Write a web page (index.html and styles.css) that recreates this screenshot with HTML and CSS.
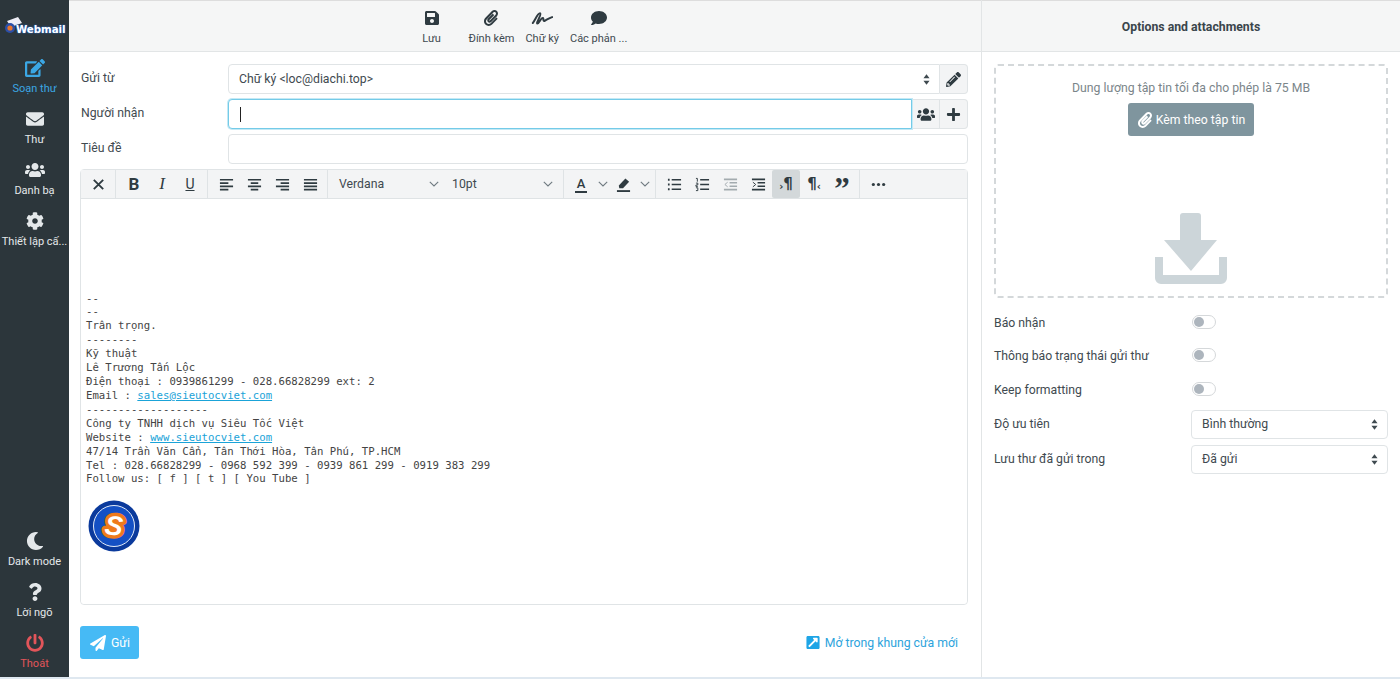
FILE: index.html
```html
<!DOCTYPE html>
<html lang="vi">
<head>
  <meta charset="UTF-8" />
  <title>Webmail</title>
  <link rel="stylesheet" href="styles.css">
</head>
<body>
  <svg class="hidden">
    <symbol id="i-save" viewBox="0 0 448 512"><path d="M433.941 129.941l-83.882-83.882A48 48 0 0 0 316.118 32H48C21.49 32 0 53.49 0 80v352c0 26.51 21.49 48 48 48h352c26.51 0 48-21.49 48-48V163.882a48 48 0 0 0-14.059-33.941zM224 416c-35.346 0-64-28.654-64-64 0-35.346 28.654-64 64-64s64 28.654 64 64c0 35.346-28.654 64-64 64zm96-304.52V212c0 6.627-5.373 12-12 12H76c-6.627 0-12-5.373-12-12V108c0-6.627 5.373-12 12-12h228.52c3.183 0 6.235 1.264 8.485 3.515l3.48 3.48A11.996 11.996 0 0 1 320 111.48z"/></symbol>
    <symbol id="i-clip" viewBox="0 0 448 512"><path d="M43.246 466.142c-58.43-60.289-57.341-157.511 1.386-217.581L254.392 34c44.316-45.332 116.351-45.336 160.671 0 43.89 44.894 43.943 117.329 0 162.276L232.214 383.128c-29.855 30.537-78.633 30.111-107.982-.998-28.275-29.97-27.368-77.473 1.452-106.953l143.743-146.835c6.182-6.314 16.312-6.422 22.626-.241l22.861 22.379c6.315 6.182 6.422 16.312.241 22.626L171.427 319.927c-4.932 5.045-5.236 13.428-.648 18.292 4.372 4.634 11.245 4.711 15.688.165l182.849-186.851c19.613-20.062 19.613-52.725-.011-72.798-19.189-19.627-49.957-19.637-69.154 0L90.39 293.295c-34.763 35.56-35.299 93.12-1.191 128.313 34.01 35.093 88.985 35.137 123.058.286l172.06-175.999c6.177-6.319 16.307-6.433 22.626-.256l22.877 22.364c6.319 6.177 6.434 16.307.256 22.626l-172.06 175.998c-59.576 60.938-155.943 60.216-214.77-.485z"/></symbol>
    <symbol id="i-comment" viewBox="0 0 512 512"><path d="M256 32C114.6 32 0 125.1 0 240c0 49.6 21.4 95 57 130.7C44.5 421.1 2.7 466 2.2 466.5c-2.2 2.3-2.8 5.7-1.5 8.7S4.8 480 8 480c66.3 0 116-31.8 140.6-51.4 32.7 12.3 69 19.4 107.4 19.4 141.4 0 256-93.1 256-208S397.4 32 256 32z"/></symbol>
    <symbol id="i-edit" viewBox="0 0 576 512"><path d="M402.6 83.2l90.2 90.2c3.8 3.8 3.8 10 0 13.8L274.4 405.6l-92.8 10.3c-12.4 1.4-22.9-9.1-21.5-21.5l10.3-92.8L388.8 83.2c3.8-3.8 10-3.8 13.8 0zm162-22.9l-48.8-48.8c-15.2-15.2-39.9-15.2-55.2 0l-35.4 35.4c-3.8 3.8-3.8 10 0 13.8l90.2 90.2c3.8 3.8 10 3.8 13.8 0l35.4-35.4c15.2-15.3 15.2-40 0-55.2zM384 346.2V448H64V128h229.8c3.2 0 6.2-1.3 8.5-3.5l40-40c7.6-7.6 2.2-20.5-8.5-20.5H48C21.5 64 0 85.5 0 112v352c0 26.5 21.5 48 48 48h352c26.5 0 48-21.5 48-48V306.2c0-10.7-12.9-16-20.5-8.5l-40 40c-2.2 2.3-3.5 5.3-3.5 8.5z"/></symbol>
    <symbol id="i-mail" viewBox="0 0 512 512"><path d="M502.3 190.8c3.9-3.1 9.7-.2 9.7 4.7V400c0 26.5-21.5 48-48 48H48c-26.5 0-48-21.5-48-48V195.6c0-5 5.7-7.8 9.7-4.7 22.4 17.4 52.1 39.5 154.1 113.6 21.1 15.4 56.7 47.8 92.2 47.6 35.7.3 72-32.8 92.3-47.6 102-74.1 131.6-96.3 154-113.7zM256 320c23.2.4 56.6-29.2 73.4-41.4 132.7-96.3 142.8-104.7 173.4-128.7 5.8-4.5 9.2-11.5 9.2-18.9v-19c0-26.5-21.5-48-48-48H48C21.5 64 0 85.5 0 112v19c0 7.4 3.4 14.3 9.2 18.9 30.6 23.9 40.7 32.4 173.4 128.7 16.8 12.2 50.2 41.8 73.4 41.4z"/></symbol>
    <symbol id="i-users" viewBox="0 0 640 512"><path d="M96 224c35.3 0 64-28.7 64-64s-28.7-64-64-64-64 28.7-64 64 28.7 64 64 64zm448 0c35.3 0 64-28.7 64-64s-28.7-64-64-64-64 28.7-64 64 28.7 64 64 64zm32 32h-64c-17.6 0-33.5 7.1-45.1 18.6 40.3 22.1 68.9 62 75.1 109.4h66c17.7 0 32-14.3 32-32v-32c0-35.3-28.7-64-64-64zm-256 0c61.9 0 112-50.1 112-112S381.9 32 320 32 208 82.1 208 144s50.1 112 112 112zm76.8 32h-8.3c-20.8 10-43.9 16-68.5 16s-47.6-6-68.5-16h-8.3C179.6 288 128 339.6 128 403.2V432c0 26.5 21.5 48 48 48h288c26.5 0 48-21.5 48-48v-28.8c0-63.6-51.6-115.2-115.2-115.2zm-223.7-13.4C161.5 263.1 145.6 256 128 256H64c-35.3 0-64 28.7-64 64v32c0 17.7 14.3 32 32 32h65.9c6.3-47.4 34.9-87.3 75.2-109.4z"/></symbol>
    <symbol id="i-cog" viewBox="0 0 512 512"><path d="M487.4 315.7l-42.6-24.6c4.3-23.2 4.3-47 0-70.2l42.6-24.6c4.9-2.8 7.1-8.6 5.5-14-11.1-35.6-30-67.8-54.7-94.6-3.8-4.1-10-5.1-14.8-2.3L380.8 110c-17.9-15.4-38.5-27.3-60.8-35.1V25.8c0-5.6-3.9-10.5-9.4-11.7-36.7-8.2-74.3-7.8-109.2 0-5.5 1.2-9.4 6.1-9.4 11.7V75c-22.2 7.9-42.8 19.8-60.8 35.1L88.7 85.5c-4.9-2.8-11-1.9-14.8 2.3-24.7 26.7-43.6 58.9-54.7 94.6-1.7 5.4.6 11.2 5.5 14L67.3 221c-4.3 23.2-4.3 47 0 70.2l-42.6 24.6c-4.9 2.8-7.1 8.6-5.5 14 11.1 35.6 30 67.8 54.7 94.6 3.8 4.1 10 5.1 14.8 2.3l42.6-24.6c17.9 15.4 38.5 27.3 60.8 35.1v49.2c0 5.6 3.9 10.5 9.4 11.7 36.7 8.2 74.3 7.8 109.2 0 5.5-1.2 9.4-6.1 9.4-11.7v-49.2c22.2-7.9 42.8-19.8 60.8-35.1l42.6 24.6c4.9 2.8 11 1.9 14.8-2.3 24.7-26.7 43.6-58.9 54.7-94.6 1.5-5.5-.7-11.3-5.6-14.1zM256 336c-44.1 0-80-35.9-80-80s35.9-80 80-80 80 35.9 80 80-35.9 80-80 80z"/></symbol>
    <symbol id="i-moon" viewBox="0 0 512 512"><path d="M283.211 512c78.962 0 151.079-35.925 198.857-94.792 7.068-8.708-.639-21.43-11.562-19.35-124.203 23.654-238.262-71.576-238.262-196.954 0-72.222 38.662-138.635 101.498-174.394 9.686-5.512 7.25-20.197-3.756-22.23A258.156 258.156 0 0 0 283.211 0c-141.309 0-256 114.511-256 256 0 141.309 114.511 256 256 256z"/></symbol>
    <symbol id="i-question" viewBox="0 0 384 512"><path d="M202.021 0C122.202 0 70.503 32.703 29.914 91.026c-7.363 10.58-5.093 25.086 5.178 32.874l43.138 32.709c10.373 7.865 25.132 6.026 33.253-4.148 25.049-31.381 43.63-49.449 82.757-49.449 30.764 0 68.816 19.799 68.816 49.631 0 22.552-18.617 34.134-48.993 51.164-35.423 19.86-82.299 44.576-82.299 106.405V320c0 13.255 10.745 24 24 24h72.471c13.255 0 24-10.745 24-24v-5.773c0-42.86 125.268-44.645 125.268-160.627C377.504 66.256 286.902 0 202.021 0zM192 373.459c-38.196 0-69.271 31.075-69.271 69.271 0 38.195 31.075 69.27 69.271 69.27s69.271-31.075 69.271-69.271-31.075-69.27-69.271-69.27z"/></symbol>
    <symbol id="i-power" viewBox="0 0 512 512"><path d="M400 54.1c63 45 104 118.6 104 201.9 0 136.8-110.8 247.7-247.5 248C120 504.3 8.2 393 8 256.4 7.9 173.1 48.9 99.3 111.8 54.2c11.7-8.3 28-4.8 35 7.7L162.6 90c5.9 10.5 3.1 23.8-6.6 31-41.5 30.8-68 79.6-68 134.9-.1 92.3 74.5 168.1 168 168.1 91.6 0 168.6-74.2 168-169.1-.3-51.8-24.7-101.8-68.1-134-9.7-7.2-12.4-20.5-6.5-30.9l15.8-28.1c7-12.4 23.2-16.1 34.8-7.8zM296 264V24c0-13.3-10.7-24-24-24h-32c-13.3 0-24 10.7-24 24v240c0 13.3 10.7 24 24 24h32c13.3 0 24-10.7 24-24z"/></symbol>
    <symbol id="i-plane" viewBox="0 0 512 512"><path d="M476 3.2L12.5 270.6c-18.1 10.4-15.8 35.6 2.2 43.2L121 358.4l287.3-253.2c5.5-4.9 13.3 2.6 8.6 8.3L176 407v80.5c0 23.6 28.5 32.9 42.5 15.8L282 426l124.6 52.2c14.2 6 30.4-2.9 33-18.2l72-432C515 7.8 493.3-6.8 476 3.2z"/></symbol>
    <symbol id="i-external" viewBox="0 0 448 512"><path d="M448 80v352c0 26.51-21.49 48-48 48H48c-26.51 0-48-21.49-48-48V80c0-26.51 21.49-48 48-48h352c26.51 0 48 21.49 48 48zm-88 16H248.029c-21.313 0-32.08 25.861-16.971 40.971l31.984 31.987L67.515 364.485c-4.686 4.686-4.686 12.284 0 16.971l31.029 31.029c4.687 4.686 12.285 4.686 16.971 0l195.526-195.526 31.988 31.991C357.058 263.977 384 253.425 384 231.979V120c0-13.255-10.745-24-24-24z"/></symbol>
    <symbol id="i-pencil" viewBox="0 0 512 512"><path d="M497.9 142.1l-46.1 46.1c-4.7 4.7-12.3 4.7-17 0l-111-111c-4.7-4.7-4.7-12.3 0-17l46.1-46.1c18.7-18.7 49.1-18.7 67.9 0l60.1 60.1c18.8 18.7 18.8 49.1 0 67.9zM284.2 99.8L21.6 362.4.4 483.9c-2.9 16.4 11.4 30.6 27.8 27.8l121.5-21.3 262.6-262.6c4.7-4.7 4.7-12.3 0-17l-111-111c-4.8-4.7-12.4-4.7-17.1 0zM124.1 339.9c-5.5-5.5-5.5-14.3 0-19.8l154-154c5.5-5.5 14.3-5.5 19.8 0s5.5 14.3 0 19.8l-154 154c-5.5 5.5-14.3 5.5-19.8 0zM88 424h48v36.3l-64.5 11.3-31.1-31.1L51.7 376H88v48z"/></symbol>
    <symbol id="i-plus" viewBox="0 0 448 512"><path d="M416 208H272V64c0-17.67-14.33-32-32-32h-32c-17.67 0-32 14.33-32 32v144H32c-17.67 0-32 14.33-32 32v32c0 17.67 14.33 32 32 32h144v144c0 17.67 14.33 32 32 32h32c17.67 0 32-14.33 32-32V304h144c17.67 0 32-14.33 32-32v-32c0-17.67-14.33-32-32-32z"/></symbol>
    <symbol id="i-sort" viewBox="0 0 8 12"><path d="M4 0 L7.5 4.5 H.5 Z M4 12 L.5 7.5 H7.5 Z"/></symbol>
    <symbol id="i-chevron" viewBox="0 0 10 6"><path d="M.8 .8 L5 5 L9.2 .8" fill="none" stroke="currentColor" stroke-width="1.1"/></symbol>
  </svg>

  <div class="app">
    <aside class="sidebar">
      <div class="brand">
        <svg class="brand-mark" viewBox="0 0 20 20">
          <path d="M4 5 L15 1 L19 7 L8 11 Z" fill="#eeeef6"/>
          <circle cx="7" cy="12" r="5" fill="#2b4fa8"/>
          <circle cx="7" cy="12" r="2.6" fill="#e8742a"/>
        </svg>
        <span class="brand-text">Webmail</span>
      </div>
      <a class="nav-item active"><svg class="nav-icon wide"><use href="#i-edit"/></svg><span>Soạn thư</span></a>
      <a class="nav-item"><svg class="nav-icon"><use href="#i-mail"/></svg><span>Thư</span></a>
      <a class="nav-item"><svg class="nav-icon wide"><use href="#i-users"/></svg><span>Danh bạ</span></a>
      <a class="nav-item"><svg class="nav-icon"><use href="#i-cog"/></svg><span>Thiết lập cấ...</span></a>
      <div class="nav-bottom">
        <a class="nav-item"><svg class="nav-icon"><use href="#i-moon"/></svg><span>Dark mode</span></a>
        <a class="nav-item"><svg class="nav-icon"><use href="#i-question"/></svg><span>Lời ngõ</span></a>
        <a class="nav-item logout"><svg class="nav-icon"><use href="#i-power"/></svg><span>Thoát</span></a>
      </div>
    </aside>

    <main class="compose">
      <div class="topbar">
        <a class="tool tool-save"><svg class="tool-icon"><use href="#i-save"/></svg><span>Lưu</span></a>
        <a class="tool"><svg class="tool-icon"><use href="#i-clip"/></svg><span>Đính kèm</span></a>
        <a class="tool"><svg class="tool-icon sign" viewBox="0 0 24 16"><path d="M2 13.5 C5 9 8 2 10 3 C12 4 5 14 7 14 C9 14 11 7 13 8 C14 9 13 12 15 11 C17 10 20 8 23 7" fill="none" stroke="currentColor" stroke-width="2.2" stroke-linecap="round"/></svg><span>Chữ ký</span></a>
        <a class="tool"><svg class="tool-icon"><use href="#i-comment"/></svg><span>Các phản ...</span></a>
      </div>

      <div class="form">
        <div class="field">
          <label>Gửi từ</label>
          <div class="group">
            <div class="control select first"><span class="value">Chữ ký &lt;loc@diachi.top&gt;</span><svg class="sort"><use href="#i-sort"/></svg></div>
            <button class="addon"><svg class="addon-icon"><use href="#i-pencil"/></svg></button>
          </div>
        </div>
        <div class="field">
          <label>Người nhận</label>
          <div class="group">
            <div class="control focus first"><span class="caret"></span></div>
            <button class="addon"><svg class="addon-icon wide"><use href="#i-users"/></svg></button>
            <button class="addon"><svg class="addon-icon"><use href="#i-plus"/></svg></button>
          </div>
        </div>
        <div class="field">
          <label>Tiêu đề</label>
          <div class="group"><div class="control"></div></div>
        </div>

        <div class="editor">
          <div class="toolbar">
            <div class="tb-group tb-close">
              <button class="tb"><svg class="glyph" viewBox="0 0 16 16"><path d="M3 3 L13 13 M13 3 L3 13" stroke-width="2"/></svg></button>
            </div>
            <div class="tb-group">
              <button class="tb tb-b">B</button>
              <button class="tb tb-i">I</button>
              <button class="tb tb-u">U</button>
            </div>
            <div class="tb-group">
              <button class="tb"><svg class="glyph" viewBox="0 0 16 16"><path d="M1 3 H15 M1 6.5 H10 M1 10 H15 M1 13.5 H10"/></svg></button>
              <button class="tb"><svg class="glyph" viewBox="0 0 16 16"><path d="M1 3 H15 M4 6.5 H12 M1 10 H15 M4 13.5 H12"/></svg></button>
              <button class="tb"><svg class="glyph" viewBox="0 0 16 16"><path d="M1 3 H15 M6 6.5 H15 M1 10 H15 M6 13.5 H15"/></svg></button>
              <button class="tb"><svg class="glyph" viewBox="0 0 16 16"><path d="M1 3 H15 M1 6.5 H15 M1 10 H15 M1 13.5 H15"/></svg></button>
            </div>
            <div class="tb-group">
              <div class="tb-select tb-font"><span>Verdana</span><svg class="chevron"><use href="#i-chevron"/></svg></div>
              <div class="tb-select tb-size"><span>10pt</span><svg class="chevron"><use href="#i-chevron"/></svg></div>
            </div>
            <div class="tb-group">
              <button class="tb tb-color"><span class="tb-a">A</span></button><svg class="chevron mini"><use href="#i-chevron"/></svg>
              <button class="tb tb-color"><svg class="glyph solid" viewBox="0 0 16 16"><path d="M3 9 L10 1.5 L14 5 L7.5 12 L3.5 12 Z"/><path class="under" d="M1 15 H15"/></svg></button><svg class="chevron mini"><use href="#i-chevron"/></svg>
            </div>
            <div class="tb-group">
              <button class="tb"><svg class="glyph" viewBox="0 0 16 16"><path d="M5 3 H15 M5 8 H15 M5 13 H15"/><path class="dots" d="M1 3 H2.8 M1 8 H2.8 M1 13 H2.8"/></svg></button>
              <button class="tb"><svg class="glyph" viewBox="0 0 16 16"><path d="M5.5 3 H15 M5.5 8 H15 M5.5 13 H15"/><path class="thin" d="M1 1.5 H2.5 V5 M1 6.5 H3 V8.5 H1 V10 H3 M1 11.5 H3 V14.5 H1"/></svg></button>
              <button class="tb muted"><svg class="glyph" viewBox="0 0 16 16"><path d="M1 2.5 H15 M7 6.2 H15 M7 9.8 H15 M1 13.5 H15"/><path class="thin" d="M5 5.5 L2 8 L5 10.5"/></svg></button>
              <button class="tb"><svg class="glyph" viewBox="0 0 16 16"><path d="M1 2.5 H15 M7 6.2 H15 M7 9.8 H15 M1 13.5 H15"/><path class="thin" d="M2 5.5 L5 8 L2 10.5"/></svg></button>
              <button class="tb tb-active tb-para"><span class="para-mark">›</span>¶</button>
              <button class="tb tb-para">¶<span class="para-mark">‹</span></button>
              <button class="tb tb-quote">”</button>
            </div>
            <div class="tb-group tb-last">
              <button class="tb"><svg class="glyph solid" viewBox="0 0 16 16"><circle cx="2.5" cy="8" r="1.7"/><circle cx="8" cy="8" r="1.7"/><circle cx="13.5" cy="8" r="1.7"/></svg></button>
            </div>
          </div>
          <div class="editor-body">
            <div class="signature">
              <div>--</div>
              <div>--</div>
              <div>Trân trọng.</div>
              <div>--------</div>
              <div>Kỹ thuật</div>
              <div>Lê Trương Tấn Lộc</div>
              <div>Điện thoại : 0939861299 - 028.66828299 ext: 2</div>
              <div><span>Email : </span><a>sales@sieutocviet.com</a></div>
              <div>-------------------</div>
              <div>Công ty TNHH dịch vụ Siêu Tốc Việt</div>
              <div><span>Website : </span><a>www.sieutocviet.com</a></div>
              <div>47/14 Trần Văn Cẩn, Tân Thới Hòa, Tân Phú, TP.HCM</div>
              <div>Tel : 028.66828299 - 0968 592 399 - 0939 861 299 - 0919 383 299</div>
              <div>Follow us: [ f ] [ t ] [ You Tube ]</div>
            </div>
            <svg class="sign-logo" viewBox="0 0 52 52">
              <circle cx="26" cy="26" r="25.5" fill="#0b3a9c"/>
              <circle cx="26" cy="26" r="20.5" fill="#1450c4" stroke="#e4ecf8" stroke-width="1"/>
              <text x="26" y="35" class="sign-s" transform="rotate(6 26 26)">S</text>
            </svg>
          </div>
        </div>

        <div class="actions">
          <button class="send"><svg class="send-icon"><use href="#i-plane"/></svg>Gửi</button>
          <a class="open-new"><svg class="open-icon"><use href="#i-external"/></svg>Mở trong khung cửa mới</a>
        </div>
      </div>
    </main>

    <section class="options">
      <div class="options-head">Options and attachments</div>
      <div class="options-body">
        <div class="dropzone">
          <p>Dung lượng tập tin tối đa cho phép là 75 MB</p>
          <button class="attach"><svg class="attach-icon"><use href="#i-clip"/></svg>Kèm theo tập tin</button>
          <svg class="drop-icon" viewBox="0 0 72 72">
            <path d="M25 3 a3 3 0 0 1 3 -3 H43 a3 3 0 0 1 3 3 V27 H62 L36 58 L9 27 H25 Z"/>
            <path d="M0 44 H8 V62 H64 V44 H72 V65 a6 6 0 0 1 -6 6 H6 a6 6 0 0 1 -6 -6 Z"/>
          </svg>
        </div>
        <div class="opt-row"><label>Báo nhận</label><span class="switch"></span></div>
        <div class="opt-row"><label>Thông báo trạng thái gửi thư</label><span class="switch"></span></div>
        <div class="opt-row"><label>Keep formatting</label><span class="switch"></span></div>
        <div class="opt-row opt-select"><label>Độ ưu tiên</label><div class="control select"><span class="value">Bình thường</span><svg class="sort"><use href="#i-sort"/></svg></div></div>
        <div class="opt-row opt-select"><label>Lưu thư đã gửi trong</label><div class="control select"><span class="value">Đã gửi</span><svg class="sort"><use href="#i-sort"/></svg></div></div>
      </div>
    </section>
  </div>
</body>
</html>
```

FILE: styles.css
```css
* { box-sizing: border-box; }
html, body { height: 100%; }
body {
  margin: 0;
  background-color: #dfe8f0;
  font-family: Roboto, "Noto Sans", sans-serif;
  font-size: 12.25px;
  color: #3f4a50;
  overflow: hidden;
}
.hidden { display: none; }
button { font-family: inherit; cursor: pointer; }
svg { fill: currentColor; display: block; }

.app {
  display: flex;
  height: 677px;
  background-color: #fff;
}

/* left nav */
.sidebar {
  width: 69px;
  flex-shrink: 0;
  display: flex;
  flex-direction: column;
  background-color: #2c363b;
  color: #e4e8ea;
}
.brand {
  position: relative;
  height: 51px;
}
.brand-mark {
  position: absolute;
  left: 3px;
  top: 16px;
  width: 20px;
  height: 20px;
}
.brand-text {
  position: absolute;
  left: 16px;
  top: 24px;
  font-family: "DejaVu Sans", sans-serif;
  font-size: 10.2px;
  font-weight: bold;
  color: #fff;
  text-shadow: 0 0 2px #2b6fd0, 0 0 1px #2b6fd0;
}
.nav-item {
  display: flex;
  flex-direction: column;
  align-items: center;
  height: 51px;
  padding-top: 8px;
  font-size: 11px;
  white-space: nowrap;
}
.nav-item span { margin-top: 4px; line-height: 15px; }
.nav-item.active { color: #3ba7e4; }
.nav-item.logout { color: #e2555a; }
.nav-icon { width: 18px; height: 18px; }
.nav-icon.wide { width: 20px; }
.nav-bottom { margin-top: auto; }

/* compose column */
.compose {
  flex: 1;
  min-width: 0;
  display: flex;
  flex-direction: column;
}
.topbar {
  height: 52px;
  display: flex;
  padding-left: 331px;
  background-color: #f5f6f6;
  border-top: 1px solid #ddd;
  border-bottom: 1px solid #e2e5e6;
}
.tool {
  display: flex;
  flex-direction: column;
  align-items: center;
  padding: 9px 5.5px 0;
  font-size: 11px;
  color: #3f4a50;
}
.tool-save { width: 63px; }
.tool span { margin-top: 6px; line-height: 14px; white-space: nowrap; }
.tool-icon { width: 16px; height: 16px; color: #2f3b41; }
.tool-icon.sign { width: 22px; }

.form {
  flex: 1;
  display: flex;
  flex-direction: column;
  padding: 12px 13px 0 11px;
}
.field {
  display: flex;
  align-items: center;
  height: 30px;
  margin-bottom: 5px;
}
.field label { width: 148px; padding-left: 1px; padding-bottom: 2px; }
.group { flex: 1; display: flex; height: 100%; }
.control {
  flex: 1;
  display: flex;
  align-items: center;
  padding: 0 10px;
  background-color: #fff;
  border: 1px solid #e0e4e6;
  border-radius: 4px;
}
.control.first { border-radius: 4px 0 0 4px; }
.control.focus {
  border-color: #74cbe8;
  box-shadow: 0 0 0 1px #c4e9f5;
  position: relative;
  z-index: 1;
}
.caret { width: 1px; height: 15px; margin-left: 1px; background-color: #222; }
.select { justify-content: space-between; }
.value { padding-bottom: 1px; }
.sort { width: 7px; height: 11px; color: #3f4a50; margin-right: -1px; }
.addon {
  width: 28px;
  display: flex;
  align-items: center;
  justify-content: center;
  padding: 0;
  background-color: #f3f4f5;
  border: 1px solid #e0e4e6;
  border-left: none;
  color: #2f3b41;
}
.addon:last-child { border-radius: 0 4px 4px 0; }
.addon-icon { width: 15px; height: 15px; }
.addon-icon.wide { width: 18px; }

/* editor */
.editor {
  height: 436px;
  display: flex;
  flex-direction: column;
  border: 1px solid #e0e4e6;
  border-radius: 4px;
}
.toolbar {
  height: 29px;
  flex-shrink: 0;
  display: flex;
  background-color: #f3f4f5;
  border-bottom: 1px solid #dfe3e5;
}
.tb-group {
  display: flex;
  align-items: center;
  padding: 0 3px 0 4px;
  border-right: 1px solid #dfe3e5;
}
.tb-close { width: 35px; padding: 0 0 0 3px; }
.tb-last { border-right: none; padding-left: 4px; }
.tb {
  width: 28px;
  height: 28px;
  display: flex;
  align-items: center;
  justify-content: center;
  padding: 0;
  background: none;
  border: none;
  border-radius: 2px;
  font-size: 15px;
  color: #2f3b41;
}
.tb-b { font-weight: bold; font-size: 17px; }
.tb-i { font-style: italic; font-family: "Liberation Serif", serif; font-size: 17px; }
.tb-u { text-decoration: underline; font-size: 14px; }
.tb-active { background-color: #d3d8da; }
.muted { color: #a3abaf; }
.glyph {
  width: 15px;
  height: 15px;
  fill: none;
  stroke: currentColor;
  stroke-width: 1.7;
}
.glyph .dots { stroke-width: 2.2; }
.glyph .thin { stroke-width: 1; }
.glyph.solid { fill: currentColor; stroke: none; }
.glyph .under { stroke: currentColor; stroke-width: 2; }
.tb-select {
  display: flex;
  align-items: center;
  justify-content: space-between;
  font-size: 12.25px;
  color: #3f4a50;
}
.tb-font { width: 112px; padding: 0 5px 0 7px; }
.tb-size { width: 116px; padding: 0 7px 0 8px; }
.chevron { width: 10px; height: 6px; color: #6f7a80; }
.chevron.mini { margin: 0 2px 0 4px; }
.tb-color { width: 26px; }
.tb-a {
  font-size: 13px;
  font-weight: 500;
  line-height: 15px;
  border-bottom: 2px solid #2f3b41;
  padding: 0 2px;
}
.tb-para {
  font-family: "DejaVu Sans", sans-serif;
  font-size: 15px;
  font-weight: bold;
}
.para-mark { font-size: 10px; line-height: 10px; align-self: flex-end; padding-bottom: 6px; }
.tb-quote {
  font-family: "Liberation Serif", serif;
  font-size: 31px;
  font-weight: bold;
  line-height: 28px;
  padding-top: 10px;
}
.editor-body {
  flex: 1;
  padding: 92.5px 5px 0;
  background-color: #fff;
  border-radius: 0 0 4px 4px;
}
.signature {
  font-family: "DejaVu Sans Mono", monospace;
  font-size: 10.67px;
  line-height: 13.92px;
  color: #444;
}
.signature div { white-space: pre; }
.signature a { color: #1aa3d8; text-decoration: underline; }
.sign-logo { width: 52px; height: 52px; margin: 14px 0 0 2px; }
.sign-s {
  font-family: "Liberation Sans", sans-serif;
  font-size: 27px;
  font-weight: bold;
  font-style: italic;
  text-anchor: middle;
  fill: #fff;
  stroke: #ee7a1c;
  stroke-width: 7px;
  stroke-linejoin: round;
  paint-order: stroke;
}

.actions {
  display: flex;
  align-items: center;
  justify-content: space-between;
  padding-top: 21px;
}
.send {
  display: flex;
  align-items: center;
  gap: 5px;
  width: 59px;
  height: 33px;
  padding: 0 0 0 10px;
  background-color: #3db7f5;
  border: none;
  border-radius: 3px;
  font-size: 12.25px;
  color: #fff;
  opacity: .95;
}
.send-icon { width: 16px; height: 16px; }
.open-new {
  display: flex;
  align-items: center;
  gap: 5px;
  padding-right: 10px;
  font-size: 12.25px;
  color: #2da3dc;
}
.open-icon { width: 14px; height: 15px; color: #1fa5e6; }

/* right column */
.options {
  width: 419px;
  flex-shrink: 0;
  display: flex;
  flex-direction: column;
  border-left: 1px solid #e2e5e6;
}
.options-head {
  height: 52px;
  padding-top: 19px;
  text-align: center;
  font-size: 12.25px;
  font-weight: bold;
  color: #3a454b;
  background-color: #f5f6f6;
  border-top: 1px solid #ddd;
  border-bottom: 1px solid #e2e5e6;
}
.options-body { padding: 12px 12px 0; }
.dropzone {
  height: 234px;
  display: flex;
  flex-direction: column;
  align-items: center;
  padding-top: 14px;
  border: 2px dashed #d4d8da;
  border-radius: 4px;
  color: #7b858a;
}
.dropzone p { margin: 0; line-height: 16px; }
.attach {
  display: flex;
  align-items: center;
  gap: 4px;
  height: 33px;
  margin-top: 7px;
  padding: 0 9px 0 10px;
  background-color: #7f959e;
  border: none;
  border-radius: 3px;
  font-size: 12.25px;
  color: #fff;
}
.attach-icon { width: 14px; height: 16px; }
.drop-icon { width: 72px; height: 72px; margin-top: 77px; fill: #ccd5d9; }
.opt-row {
  display: flex;
  align-items: center;
  height: 33.5px;
}
.opt-row:nth-child(2) { margin-top: 7px; }
.opt-row label { width: 198px; padding-top: 2px; }
.switch {
  position: relative;
  width: 24px;
  height: 14px;
  border: 1px solid #d5d8da;
  border-radius: 7px;
  background-color: #fff;
}
.switch::after {
  content: "";
  position: absolute;
  left: 1px;
  top: 1px;
  width: 10px;
  height: 10px;
  border-radius: 50%;
  background-color: #adb5bd;
}
.opt-select { height: 29px; margin-bottom: 6px; }
.opt-select label { width: 197px; padding: 0 0 2px; }
.opt-select .control { align-self: stretch; }
.opt-row:nth-child(4) { margin-bottom: 4.5px; }
```
